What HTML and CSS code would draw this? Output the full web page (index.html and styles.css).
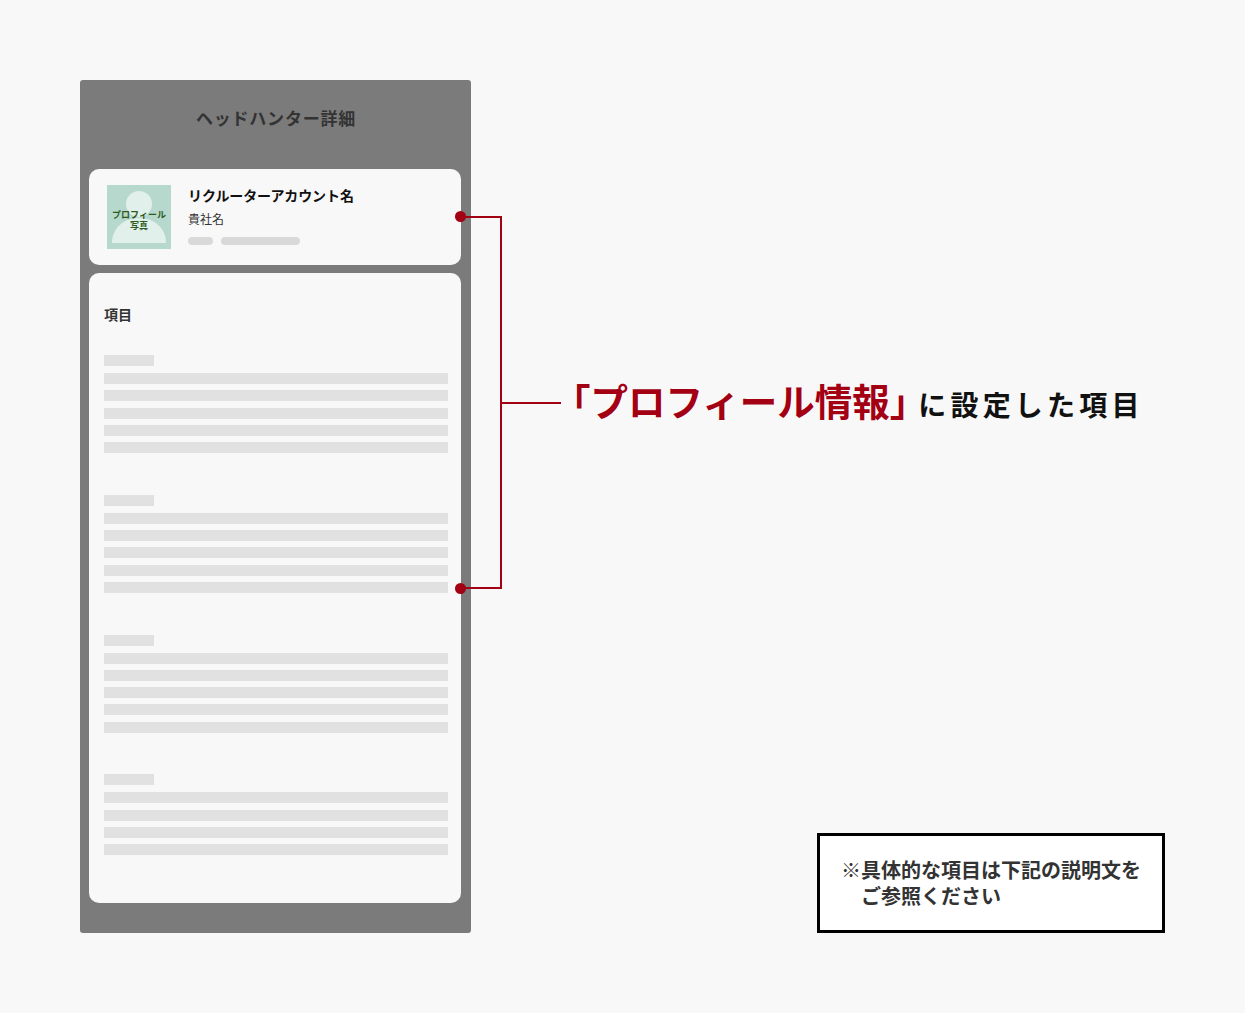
FILE: index.html
```html
<!DOCTYPE html>
<html lang="ja">
<head>
<meta charset="utf-8">
<title>プロフィール情報</title>
<link rel="stylesheet" href="styles.css">
</head>
<body>
<main class="stage">
  <section class="phone">
    <h1 class="phone-title">ヘッドハンター詳細</h1>
    <div class="card profile">
      <div class="avatar">
        <svg class="avatar-icon" viewBox="0 0 64 64" aria-hidden="true">
          <circle cx="32" cy="19" r="13" fill="#e2f0eb"/>
          <path d="M5 58C5 43 17 33 32 33S59 43 59 58Z" fill="#e2f0eb"/>
        </svg>
        <span class="avatar-label">プロフィール<br>写真</span>
      </div>
      <div class="profile-info">
        <div class="profile-name">リクルーターアカウント名</div>
        <div class="profile-company">貴社名</div>
        <div class="tags"><span class="tag tag-short"></span><span class="tag tag-long"></span></div>
      </div>
    </div>
    <div class="card details">
      <h2 class="details-title">項目</h2>
      <div class="group"><div class="bar bar-label"></div><div class="bar"></div><div class="bar"></div><div class="bar"></div><div class="bar"></div><div class="bar"></div></div>
      <div class="group"><div class="bar bar-label"></div><div class="bar"></div><div class="bar"></div><div class="bar"></div><div class="bar"></div><div class="bar"></div></div>
      <div class="group"><div class="bar bar-label"></div><div class="bar"></div><div class="bar"></div><div class="bar"></div><div class="bar"></div><div class="bar"></div></div>
      <div class="group"><div class="bar bar-label"></div><div class="bar"></div><div class="bar"></div><div class="bar"></div><div class="bar"></div></div>
    </div>
  </section>

  <div class="bracket"></div>
  <div class="dot dot-top"></div>
  <div class="dot dot-bottom"></div>
  <div class="leader"></div>
  <p class="callout"><strong class="callout-em">「プロフィール情報」</strong><span class="callout-rest">に設定した項目</span></p>

  <aside class="note">
    <span class="note-mark">※</span><span class="note-text">具体的な項目は下記の説明文を<br>ご参照ください</span>
  </aside>
</main>
</body>
</html>
```

FILE: styles.css
```css
* { box-sizing: border-box; }
html, body { margin: 0; padding: 0; }
body {
  background: #f8f8f8;
  font-family: "Noto Sans CJK JP", "Noto Sans", sans-serif;
  color: #333;
}
.stage {
  position: relative;
  width: 1245px;
  height: 1013px;
  padding: 80px 0 0 80px;
}
.phone {
  width: 391px;
  height: 853px;
  background: #7b7b7b;
  border-radius: 3px;
  padding: 0 10px 30px 9px;
  display: flex;
  flex-direction: column;
  gap: 8px;
}
.phone-title {
  margin: 0;
  height: 81px;
  padding: 25px 0 0 2px;
  font-size: 17px;
  line-height: 25px;
  font-weight: 700;
  letter-spacing: 0.8px;
  text-align: center;
  color: #333;
}
.card {
  background: #f8f8f8;
  border-radius: 10px;
}
.profile {
  height: 96px;
  padding: 16px 18px;
  display: flex;
  gap: 17px;
}
.avatar {
  position: relative;
  width: 64px;
  height: 64px;
  flex: none;
  background: #b7d8cc;
}
.avatar-icon { display: block; width: 64px; height: 64px; }
.avatar-label {
  position: absolute;
  left: 0;
  right: 0;
  top: 24px;
  font-size: 9px;
  line-height: 11px;
  font-weight: 700;
  text-align: center;
  color: #2c5b22;
}
.profile-info { display: flex; flex-direction: column; min-width: 0; margin-top: -1px; }
.profile-name {
  font-size: 14px;
  line-height: 22px;
  font-weight: 700;
  letter-spacing: -0.1px;
  color: #111;
}
.profile-company {
  font-size: 12px;
  line-height: 16px;
  margin-top: 5px;
  color: #333;
}
.tags { display: flex; gap: 8px; margin-top: 10px; }
.tag { height: 8px; border-radius: 4px; background: #d9d9d9; }
.tag-short { width: 25px; }
.tag-long { width: 79px; }
.details {
  height: 630px;
  padding: 32px 13px 0 15px;
}
.details-title {
  margin: 0 0 31px;
  font-size: 14px;
  line-height: 19px;
  font-weight: 700;
  color: #333;
}
.group {
  display: flex;
  flex-direction: column;
  gap: 6.25px;
  margin-bottom: 41.75px;
}
.bar { height: 11px; background: #e1e1e1; }
.bar-label { width: 50px; margin-bottom: 0.75px; }

.bracket {
  position: absolute;
  left: 461px;
  top: 216px;
  width: 41px;
  height: 373px;
  border: 2px solid #a30013;
  border-left: 0;
}
.dot {
  position: absolute;
  left: 455px;
  width: 11px;
  height: 11px;
  border-radius: 50%;
  background: #a30013;
}
.dot-top { top: 211px; }
.dot-bottom { top: 582.5px; }
.leader {
  position: absolute;
  left: 501px;
  top: 402px;
  width: 60px;
  height: 2px;
  background: #a30013;
}
.callout {
  position: absolute;
  left: 553px;
  top: 373px;
  margin: 0;
  white-space: nowrap;
  display: flex;
  align-items: baseline;
}
.callout-em {
  font-size: 37.5px;
  line-height: 54px;
  font-weight: 700;
  color: #a30013;
}
.callout-rest {
  margin-left: -9px;
  font-size: 28px;
  line-height: 54px;
  font-weight: 700;
  letter-spacing: 4.2px;
  color: #111;
}
.note {
  position: absolute;
  left: 817px;
  top: 833px;
  width: 348px;
  height: 100px;
  border: 3px solid #000;
  background: #fff;
  padding: 21px 0 0 21px;
  display: flex;
  font-size: 20px;
  line-height: 26px;
  font-weight: 700;
  color: #333;
  white-space: nowrap;
}
.note-mark { font-weight: 400; }
```
